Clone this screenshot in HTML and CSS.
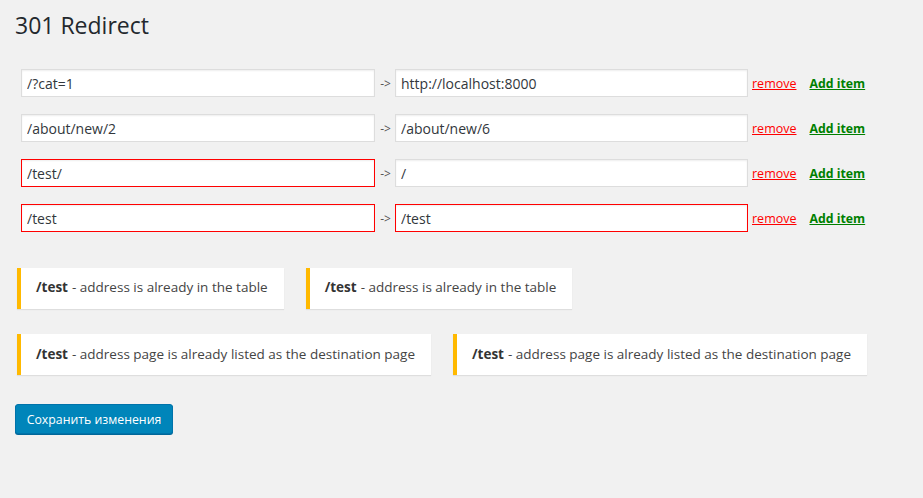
FILE: index.html
```html
<!DOCTYPE html>
<html>
<head>
<meta charset="utf-8">
<link rel="stylesheet" href="styles.css">
</head>
<body>
<div class="wrap">
  <h1 class="title">301 Redirect</h1>
  <div class="rows">
    <div class="row">
      <input class="field" type="text" value="/?cat=1">
      <span class="arrow">-&gt;</span>
      <input class="field field-to" type="text" value="http://localhost:8000">
      <a class="remove" href="#">remove</a>
      <a class="add" href="#">Add item</a>
    </div>
    <div class="row">
      <input class="field" type="text" value="/about/new/2">
      <span class="arrow">-&gt;</span>
      <input class="field field-to" type="text" value="/about/new/6">
      <a class="remove" href="#">remove</a>
      <a class="add" href="#">Add item</a>
    </div>
    <div class="row">
      <input class="field error" type="text" value="/test/">
      <span class="arrow">-&gt;</span>
      <input class="field field-to" type="text" value="/">
      <a class="remove" href="#">remove</a>
      <a class="add" href="#">Add item</a>
    </div>
    <div class="row">
      <input class="field error" type="text" value="/test">
      <span class="arrow">-&gt;</span>
      <input class="field field-to error" type="text" value="/test">
      <a class="remove" href="#">remove</a>
      <a class="add" href="#">Add item</a>
    </div>
  </div>
  <div class="notices">
    <div class="notice"><b>/test</b> - address is already in the table</div>
    <div class="notice"><b>/test</b> - address is already in the table</div>
  </div>
  <div class="notices notices-2">
    <div class="notice"><b>/test</b> - address page is already listed as the destination page</div>
    <div class="notice"><b>/test</b> - address page is already listed as the destination page</div>
  </div>
  <button class="save" type="button">Сохранить изменения</button>
</div>
</body>
</html>
```

FILE: styles.css
```css
html, body {
  margin: 0;
  padding: 0;
  background: #f1f1f1;
}
body {
  font-family: "Open Sans", "Noto Sans", sans-serif;
  color: #444;
  width: 923px;
  height: 498px;
  overflow: hidden;
}
.wrap {
  padding: 11px 0 0 15px;
}
.title {
  margin: 0;
  font-size: 23px;
  line-height: 29px;
  font-weight: 400;
  color: #23282d;
}
.rows {
  margin-top: 29px;
  padding-left: 6px;
  display: flex;
  flex-direction: column;
  gap: 17px;
}
.row {
  display: flex;
  align-items: center;
  height: 28px;
}
.field {
  box-sizing: border-box;
  width: 354px;
  height: 28px;
  margin: 0;
  padding: 0 5px;
  border: 1px solid #ddd;
  background: #fff;
  box-shadow: inset 0 1px 2px rgba(0,0,0,.07);
  font-family: "Open Sans", "Noto Sans", sans-serif;
  font-size: 14px;
  color: #32373c;
  outline: none;
}
.field-to {
  width: 353px;
}
.field.error {
  border-color: #f00;
}
.arrow {
  width: 21px;
  margin-right: -1px;
  text-align: center;
  font-size: 12px;
  color: #555;
}
.remove {
  margin-left: 4px;
  font-size: 12.5px;
  color: #f00;
  text-decoration: underline;
}
.add {
  margin-left: 13px;
  font-size: 12.3px;
  font-weight: 700;
  color: #008000;
  text-decoration: underline;
}
.notices {
  margin-top: 36px;
  margin-left: 2px;
  display: flex;
  gap: 22px;
}
.notices-2 {
  margin-top: 25px;
}
.notice {
  box-sizing: border-box;
  height: 41px;
  display: flex;
  align-items: center;
  padding: 0 16px 3px 15px;
  background: #fff;
  border-left: 4px solid #ffb900;
  box-shadow: 0 1px 1px rgba(0,0,0,.08);
  font-size: 13.5px;
  color: #444;
  white-space: nowrap;
}
.notices-2 .notice {
  padding-bottom: 2px;
}
.notice b {
  color: #333;
  margin-right: 4px;
}
.save {
  margin-top: 29px;
  box-sizing: border-box;
  width: 158px;
  height: 30px;
  padding: 0;
  background: #0085ba;
  border: 1px solid #0073aa;
  border-radius: 3px;
  box-shadow: 0 1px 0 #006799;
  color: #fff;
  font-family: "Open Sans", "Noto Sans", sans-serif;
  font-size: 12.3px;
  cursor: pointer;
}
```
